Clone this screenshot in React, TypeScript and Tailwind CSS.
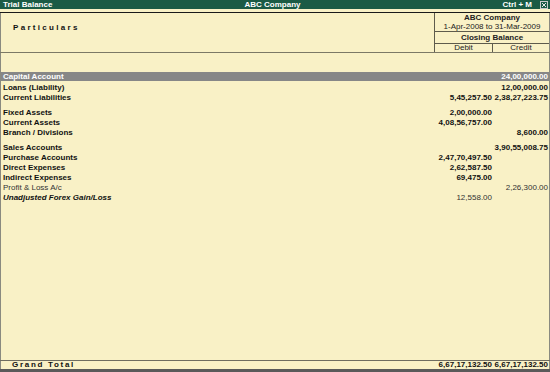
const rows = [
  [
    { name: 'Capital Account', credit: '24,00,000.00', active: true },
    { name: 'Loans (Liability)', credit: '12,00,000.00' },
    { name: 'Current Liabilities', debit: '5,45,257.50', credit: '2,38,27,223.75' },
  ],
  [
    { name: 'Fixed Assets', debit: '2,00,000.00' },
    { name: 'Current Assets', debit: '4,08,56,757.00' },
    { name: 'Branch / Divisions', credit: '8,600.00' },
  ],
  [
    { name: 'Sales Accounts', credit: '3,90,55,008.75' },
    { name: 'Purchase Accounts', debit: '2,47,70,497.50' },
    { name: 'Direct Expenses', debit: '2,62,587.50' },
    { name: 'Indirect Expenses', debit: '69,475.00' },
    { name: 'Profit & Loss A/c', credit: '2,26,300.00', plain: true },
    { name: 'Unadjusted Forex Gain/Loss', debit: '12,558.00', italic: true },
  ],
] as { name: string; debit?: string; credit?: string; active?: boolean; plain?: boolean; italic?: boolean }[][]

export default function App() {
  return (
    <div className="w-[550px] h-[372px] bg-[#f9f1c6] flex flex-col overflow-hidden font-['Liberation_Sans',Arial,sans-serif] text-[8px] text-[#111]">
      {/* title bar */}
      <div className="h-[9px] bg-[#1b5b45] flex items-center text-white font-bold leading-[9px] pl-[3px] pr-[2px]">
        <div className="flex-1">Trial Balance</div>
        <div className="pr-[6px]">ABC Company</div>
        <div className="flex-1 flex justify-end items-center gap-[8px]">
          <span>Ctrl + M</span>
          <svg width="8" height="8" viewBox="0 0 8 8">
            <rect x="0.5" y="0.5" width="7" height="7" fill="none" stroke="#c9c9c9" strokeWidth="1" />
            <path d="M2 2 L6 6 M6 2 L2 6" stroke="#e6e6e6" strokeWidth="1" />
          </svg>
        </div>
      </div>
      <div className="h-[3px]" />
      <div className="h-[1px] bg-[#1a1a1a]" />

      {/* header */}
      <div className="h-[39px] flex border-x border-[#8a8a80]">
        <div className="flex-1 pt-[10px] pl-[12px] leading-[10px] font-bold tracking-[2.3px]">Particulars</div>
        <div className="w-[115px] border-l border-[#5e5b4c] flex flex-col text-center text-[#222]">
          <div className="h-[18px] flex flex-col justify-center leading-[9px]">
            <div className="font-bold">ABC Company</div>
            <div>1-Apr-2008 to 31-Mar-2009</div>
          </div>
          <div className="h-[12px] border-t border-[#5e5b4c] font-bold leading-[11px]">Closing Balance</div>
          <div className="flex-1 border-t border-[#5e5b4c] flex leading-[8px]">
            <div className="w-[58px] border-r border-[#5e5b4c]">Debit</div>
            <div className="flex-1">Credit</div>
          </div>
        </div>
      </div>
      <div className="h-[1px] bg-[#7c7966]" />

      {/* body */}
      <div className="flex-1 border-x border-[#8a8a80] pt-[19px] flex flex-col gap-[5px]">
        {rows.map((group, gi) => (
          <div key={gi} className="flex flex-col">
            {group.map((r) => (
              <div
                key={r.name}
                className={
                  r.active
                    ? 'h-[9px] mb-[1px] leading-[10px] flex bg-[#878787] text-white font-bold'
                    : `h-[10px] leading-[11px] flex ${r.plain ? 'text-[#333]' : 'font-bold'}`
                }
              >
                <div className={`flex-1 pl-[2px] ${r.italic ? 'italic' : ''}`}>{r.name}</div>
                <div className={`w-[58px] text-right pr-[2px] ${r.italic ? 'font-normal text-[#333]' : ''}`}>{r.debit}</div>
                <div className="w-[55px] text-right pr-[1px]">{r.credit}</div>
              </div>
            ))}
          </div>
        ))}
      </div>

      {/* footer */}
      <div className="h-[1px] bg-[#6f6d60]" />
      <div className="h-[8px] leading-[8px] flex font-bold border-x border-[#8a8a80]">
        <div className="flex-1 pl-[11px] tracking-[1.7px]">Grand Total</div>
        <div className="w-[58px] text-right pr-[2px]">6,67,17,132.50</div>
        <div className="w-[55px] text-right pr-[1px]">6,67,17,132.50</div>
      </div>
      <div className="h-[3px] bg-[#5a5a5a]" />
    </div>
  )
}
